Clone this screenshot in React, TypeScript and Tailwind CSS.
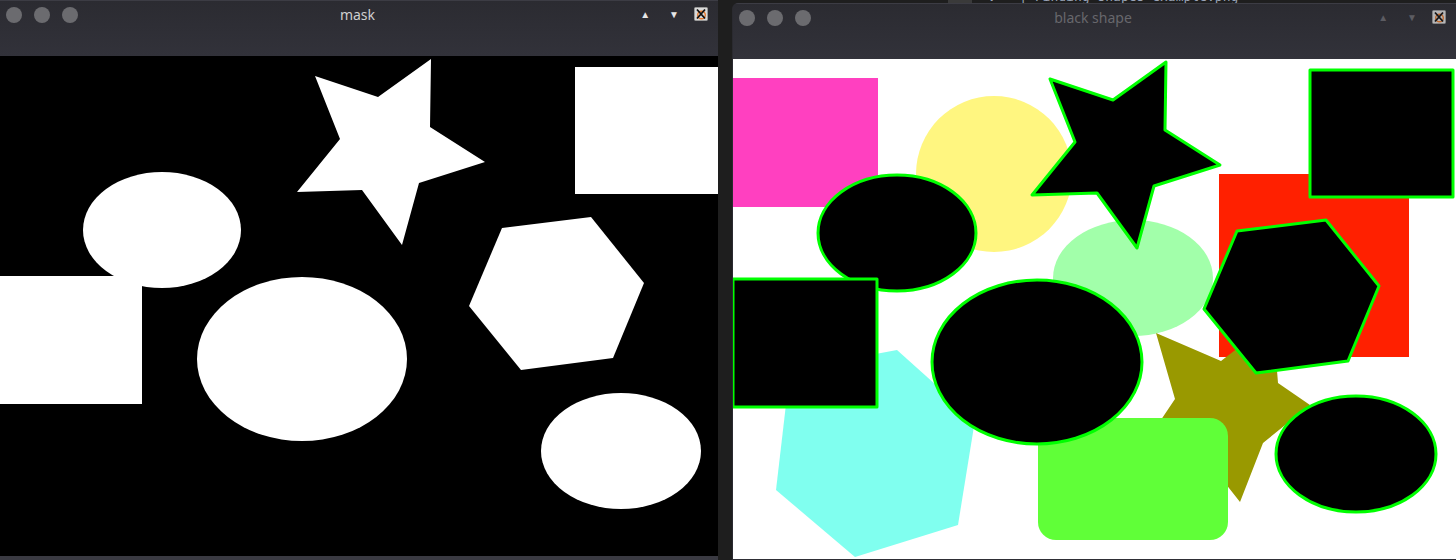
import React from 'react';

type Pt = [number, number];

const pts = (p: Pt[]) => p.map(([x, y]) => `${x},${y}`).join(' ');

const star: Pt[] = [
  [317, 20], [380, 41], [433, 3], [432, 71], [487, 106],
  [421, 127], [404, 189], [364, 134], [299, 136], [342, 83],
];
const hexE: Pt[] = [[504, 172], [593, 161], [646, 227], [615, 302], [523, 314], [471, 250]];
const hexCyan: Pt[] = [[57, 311], [164, 291], [242, 361], [225, 466], [122, 498], [43, 431]];
const olive: Pt[] = [
  [423, 274], [488, 302], [540, 262], [545, 324], [577, 346],
  [530, 384], [507, 443], [470, 396], [405, 395], [442, 340],
];

function ShapesImage({ mask }: { mask?: boolean }) {
  const fg = mask ? '#ffffff' : '#000000';
  const stroke = mask ? 'none' : '#00ff00';
  const sw = mask ? 0 : 3;
  return (
    <svg width={723} height={500} viewBox="0 0 723 500" className="block shrink-0">
      <rect x={0} y={0} width={723} height={500} fill={mask ? '#000000' : '#ffffff'} />
      {!mask && (
        <g>
          <rect x={0} y={19} width={145} height={129} fill="#ff40c0" />
          <circle cx={261} cy={115} r={78} fill="#fff680" />
          <polygon points={pts(hexCyan)} fill="#80ffef" />
          <ellipse cx={400} cy={219} rx={80} ry={58} fill="#a2ffaa" />
          <rect x={486} y={115} width={190} height={183} fill="#ff2000" />
          <polygon points={pts(olive)} fill="#999900" />
          <rect x={305} y={359} width={190} height={122} rx={18} fill="#60ff38" />
        </g>
      )}
      <g fill={fg} stroke={stroke} strokeWidth={sw} strokeLinejoin="round">
        <polygon points={pts(star)} />
        <rect x={577} y={11} width={143} height={127} />
        <ellipse cx={164} cy={174} rx={79} ry={58} />
        <rect x={0} y={220} width={144} height={128} />
        <ellipse cx={304} cy={303} rx={105} ry={82} />
        <polygon points={pts(hexE)} />
        <ellipse cx={623} cy={395} rx={80} ry={58} />
      </g>
    </svg>
  );
}

function XIcon({ dim }: { dim?: boolean }) {
  return (
    <svg width={14} height={14} viewBox="0 0 14 14" className={dim ? 'opacity-80' : ''}>
      <rect x={0.5} y={0.5} width={13} height={13} rx={1} fill="#d9d9d9" stroke="#9a9a9a" />
      <circle cx={7.5} cy={8} r={3.8} fill="none" stroke="#e8782a" strokeWidth={1.4} />
      <path d="M3 2.5 L11 11.5 M11 2.5 L3 11.5" stroke="#111" strokeWidth={1.8} />
    </svg>
  );
}

function TitleBar({ title, active }: { title: string; active?: boolean }) {
  const arrow = active ? 'text-[#e6e6e6]' : 'text-[#5c5c62]';
  return (
    <div className="grid h-full grid-cols-[1fr_auto_1fr] items-start bg-gradient-to-b from-[#2b2b31] to-[#32323a] border-t border-[#3c3c44]">
      <div className="flex gap-3 pl-[6px] pt-[6px]">
        <span className="h-4 w-4 rounded-full bg-[#6b6b6f]" />
        <span className="h-4 w-4 rounded-full bg-[#6b6b6f]" />
        <span className="h-4 w-4 rounded-full bg-[#6b6b6f]" />
      </div>
      <div
        className={`pr-[3px] pt-[4px] text-[14px] leading-5 ${active ? 'text-[#cfcfcf]' : 'text-[#67676c]'}`}
        style={{ fontFamily: '"Noto Sans", "DejaVu Sans", sans-serif' }}
      >
        {title}
      </div>
      <div className="flex items-center justify-end pr-[10px] pt-[6px]">
        <span className={`mr-[19px] text-[10px] leading-[14px] ${arrow}`}>▲</span>
        <span className={`mr-[15px] text-[10px] leading-[14px] ${arrow}`}>▼</span>
        <XIcon dim={!active} />
      </div>
    </div>
  );
}

export default function App() {
  return (
    <div className="flex h-[560px] w-[1456px] gap-[14px] overflow-hidden bg-[#1e1e1e]">
      <div className="flex w-[718px] shrink-0 flex-col">
        <div className="h-[56px] shrink-0">
          <TitleBar title="mask" active />
        </div>
        <div className="h-[500px] shrink-0 overflow-hidden">
          <div className="-ml-[2px]">
            <ShapesImage mask />
          </div>
        </div>
        <div className="h-[4px] bg-[#3a3a42]" />
      </div>

      <div className="flex min-w-0 flex-1 flex-col">
        <div className="relative h-[3px] shrink-0 overflow-hidden">
          <div
            className="-mt-[9px] flex gap-4 pl-[216px] text-[13px] leading-[12px] text-[#9aa5b8]"
            style={{ fontFamily: '"DejaVu Sans Mono", monospace' }}
          >
            <span className="bg-[#3a3a3a] px-2">&nbsp;</span>
            <span>v = | Finding_shapes_example.png</span>
          </div>
        </div>
        <div className="flex flex-1 flex-col overflow-hidden rounded-tl-md border-l border-[#2a2a30] bg-[#2e2e35]">
          <div className="h-[56px] shrink-0">
            <TitleBar title="black shape" />
          </div>
          <div className="h-[500px] shrink-0 overflow-hidden">
            <ShapesImage />
          </div>
        </div>
      </div>
    </div>
  );
}
